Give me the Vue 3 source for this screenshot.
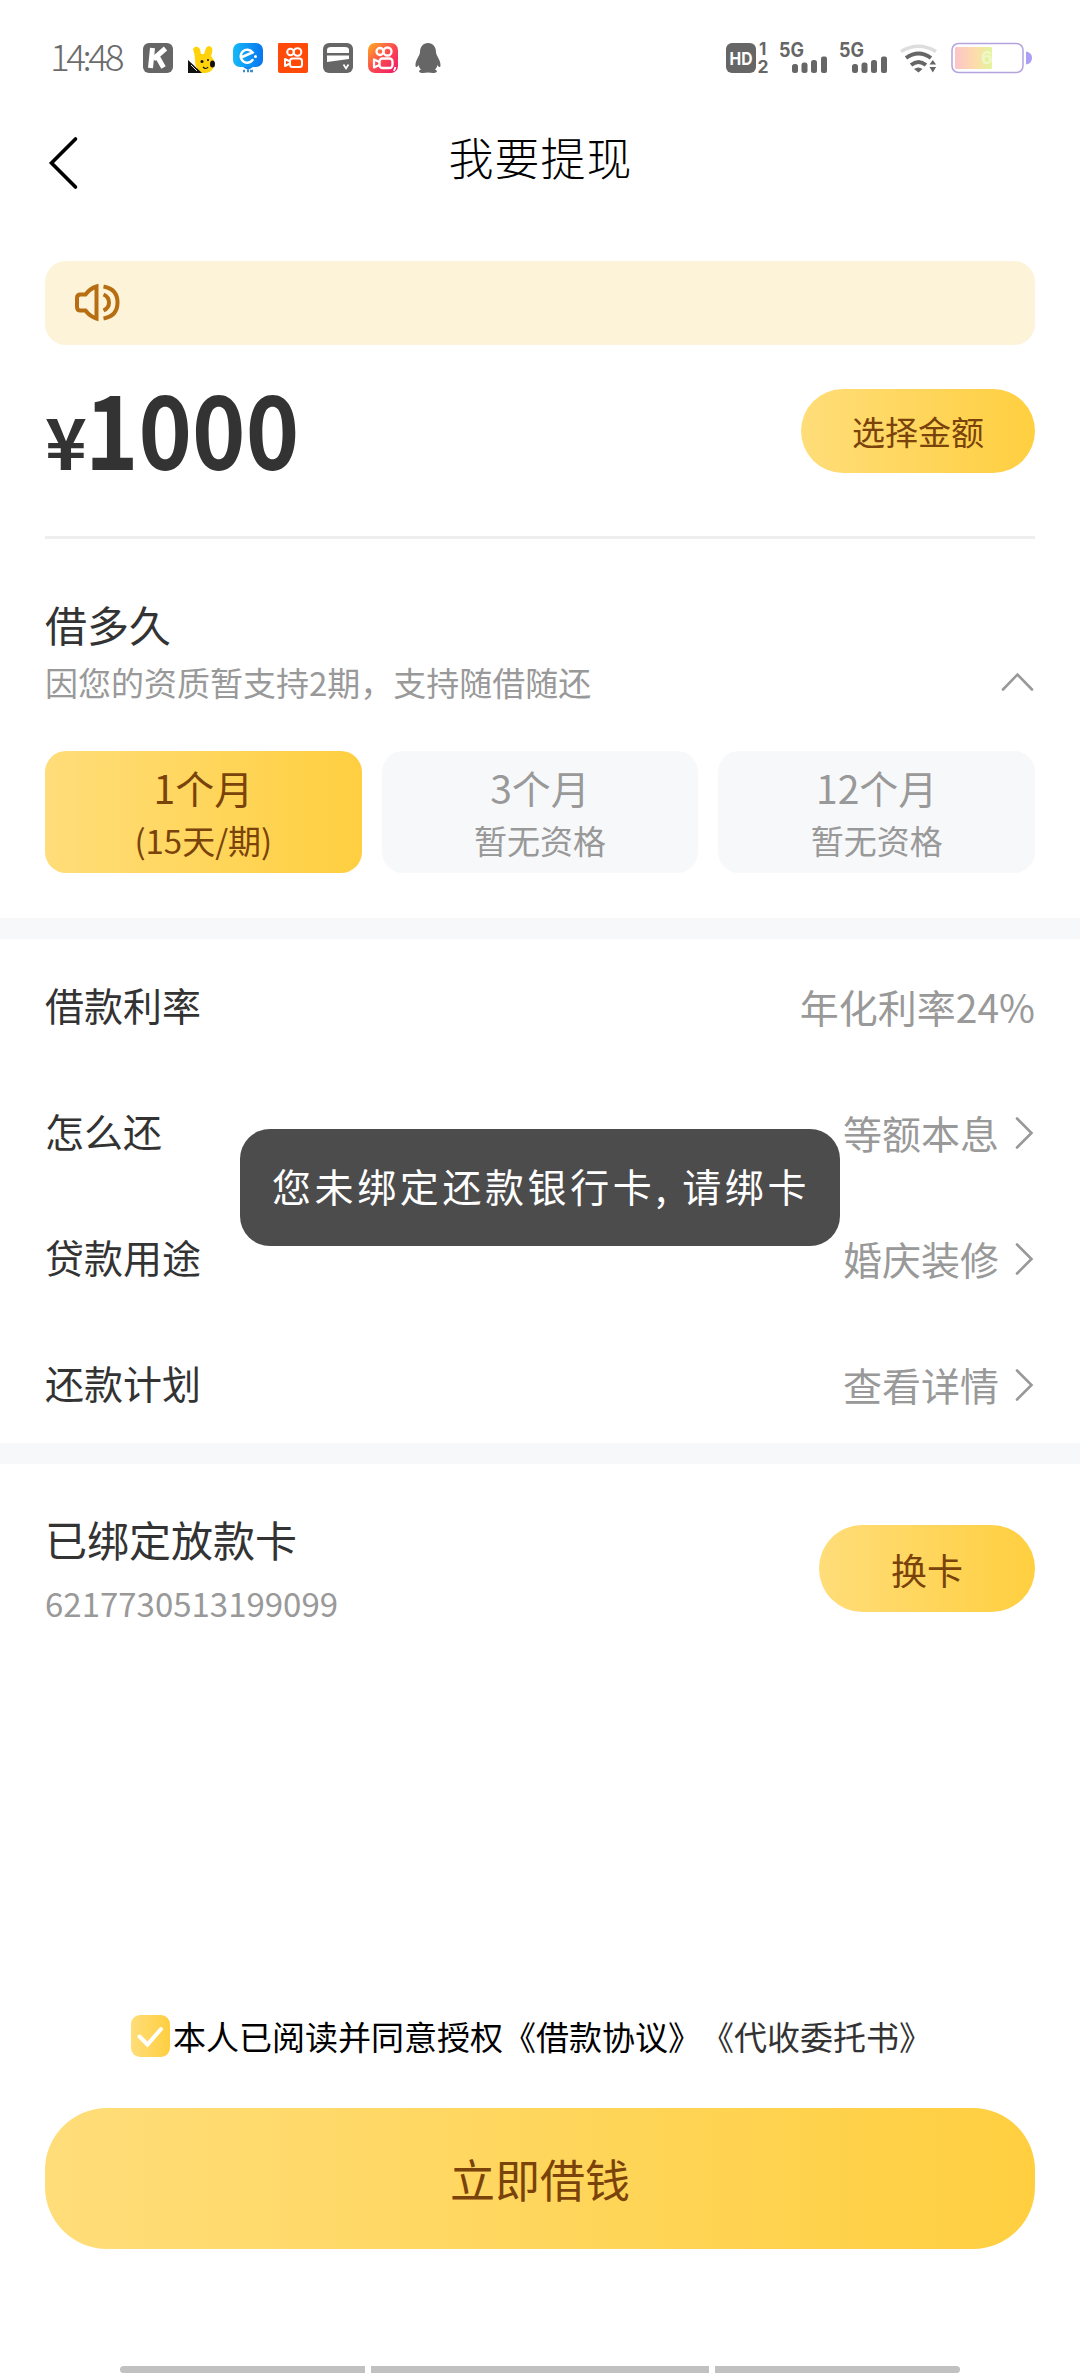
<script setup>
const terms = [
  { title: '1个月', note: '(15天/期)', active: true },
  { title: '3个月', note: '暂无资格', active: false },
  { title: '12个月', note: '暂无资格', active: false },
]
const rows = [
  { label: '借款利率', value: '年化利率24%', link: false },
  { label: '怎么还', value: '等额本息', link: true },
  { label: '贷款用途', value: '婚庆装修', link: true },
  { label: '还款计划', value: '查看详情', link: true },
]
</script>

<template>
  <div class="page">
    <div class="status">
      <span class="clock">14:48</span>
      <div class="apps">
        <svg width="30" height="30" viewBox="0 0 30 30">
          <rect width="30" height="30" rx="6" fill="#666" />
          <path d="M9.500 5 7.500 25M22.500 5.500 10.500 16M14 13l6.500 11.500" fill="none" stroke="#fff" stroke-width="5" />
        </svg>
        <svg width="30" height="30" viewBox="0 0 30 30">
          <path d="M5 6Q8 1 12 6L13 11 16 11 18 5Q21 1 24 5 25 8 23 13 27 17 26 23 24 30 17 30L13 30Q7 26 7 17 7 12 5 6Z" fill="#ffd20a" />
          <path d="M0 17 14 30H0Z" fill="#111" />
          <path d="M3 22l6 6M5 21l4 4" stroke="#ddd" stroke-width="1" />
          <ellipse cx="24.500" cy="21" rx="2.500" ry="3.500" fill="#111" />
          <circle cx="14" cy="18.500" r="1.500" fill="#111" /><circle cx="20" cy="17" r="1" fill="#111" />
          <path d="M15 24q3 3 5 0" fill="none" stroke="#111" stroke-width="1.200" />
        </svg>
        <svg width="30" height="30" viewBox="0 0 30 30">
          <defs><linearGradient id="blue" x1="0" x2="1"><stop offset="0" stop-color="#16b9f8" /><stop offset="1" stop-color="#0875ee" /></linearGradient></defs>
          <rect width="30" height="24" rx="7" fill="url(#blue)" />
          <path d="M10 24h10l-5 3z" fill="#0d86f0" />
          <path d="M8 14.500 19.500 9.500A6.500 6.500 0 1 0 19.500 17" fill="none" stroke="#fff" stroke-width="2.600" stroke-linecap="round" />
          <circle cx="22.500" cy="13.500" r="1.500" fill="#fff" />
          <path d="M10 28h2m2 0h2m1 0h3" stroke="#3d8ecb" stroke-width="2.500" />
        </svg>
        <svg width="30" height="30" viewBox="0 0 30 30">
          <rect y="-.5" width="30" height="30.500" rx="2" fill="#ff4a0a" />
          <g fill="none" stroke="#fff" stroke-width="2"><circle cx="12.500" cy="9" r="3.300" /><circle cx="19.500" cy="9" r="3.800" /><rect x="12" y="15.500" width="12" height="8.500" rx="2.500" /><path d="M12 18.500 7 16v7l5-2.500" stroke-linejoin="round" /></g>
        </svg>
        <svg width="30" height="30" viewBox="0 0 30 30">
          <rect width="30" height="30" rx="6" fill="#666" />
          <path d="M4 10V7Q4 4 8 4H22Q26 4 26 7V10ZM4 12.500H26V16L4 19Z" fill="#fff" />
          <path d="m20.500 21.500 2.500 4 2.500-4" fill="none" stroke="#fff" stroke-width="1.700" />
        </svg>
        <svg width="30" height="30" viewBox="0 0 30 30">
          <defs><linearGradient id="kw" x1="0" y1="0" x2="1" y2="1"><stop offset="0" stop-color="#ffae21" /><stop offset=".5" stop-color="#fb4a50" /><stop offset="1" stop-color="#ed176b" /></linearGradient></defs>
          <rect width="30" height="30" rx="7" fill="url(#kw)" />
          <g fill="none" stroke="#fff" stroke-width="2.300"><circle cx="12" cy="8.500" r="3.500" /><circle cx="19.500" cy="8.500" r="4" /><rect x="11.500" y="15.500" width="13" height="9.500" rx="3" /><path d="M11.500 19 6 16.500v8l5.500-2.500" stroke-linejoin="round" /></g>
          <path d="m27.500 24-1.500 4" stroke="#fff" stroke-width="1.800" />
        </svg>
        <svg width="30" height="30" viewBox="0 0 30 30">
          <path d="M15 0C20 0 23 4 23 9 23 13 28 17 27.500 23 27 25 25.500 24 24.500 22 24 24 23 25.500 22 26.500 25 27.500 24.500 30 20 30L15 29.500 10 30C5.500 30 5 27.500 8 26.500 7 25.500 6 24 5.500 22 4.500 24 3 25 2.500 23 2 17 7 13 7 9 7 4 10 0 15 0Z" fill="#666" />
        </svg>
      </div>
      <svg class="signals" width="308" height="54" viewBox="0 -10 308 54">
        <rect x="0" y="2" width="30" height="30" rx="6" fill="#666" />
        <g class="sys">
          <text x="3.500" y="23.500" font-size="18" fill="#fff" textLength="23" lengthAdjust="spacingAndGlyphs">HD</text>
          <text x="33" y="14" font-size="17">1</text>
          <text x="31.500" y="31.500" font-size="17" textLength="11" lengthAdjust="spacingAndGlyphs">2</text>
          <text x="53" y="16" font-size="19.500" textLength="25" lengthAdjust="spacingAndGlyphs">5G</text>
          <text x="113" y="16" font-size="19.500" textLength="25" lengthAdjust="spacingAndGlyphs">5G</text>
        </g>
        <g fill="#666">
          <rect x="66" y="23" width="6" height="9" rx="2.500" /><rect x="75.500" y="21.500" width="6" height="10.500" rx="2.500" /><rect x="85" y="19" width="6" height="13" rx="2.500" /><rect x="95" y="15.500" width="6" height="16.500" rx="2" />
          <rect x="126" y="23" width="6" height="9" rx="2.500" /><rect x="135.500" y="21.500" width="6" height="10.500" rx="2.500" /><rect x="145" y="19" width="6" height="13" rx="2.500" /><rect x="155" y="15.500" width="6" height="16.500" rx="2" />
        </g>
        <path d="M175 10.500Q192.500 0 210 10.500" fill="none" stroke="#ddd" stroke-width="3.500" />
        <path d="M180 17Q192.500 8 205 17M185 24Q192.500 18 200 24" fill="none" stroke="#666" stroke-width="4" />
        <path d="M188 28Q192.500 25 196.500 28L192.500 31.500Z M203.500 23.500l3.300-4.500 3.300 4.500ZM203.500 26h6.600l-3.300 5.500Z" fill="#666" />
        <defs><linearGradient id="bat" x1="0" x2="1"><stop offset="0" stop-color="#fbc4ca" /><stop offset=".55" stop-color="#fddcaa" /><stop offset="1" stop-color="#e2f59c" /></linearGradient></defs>
        <rect x="226" y="2.500" width="71" height="29" rx="6.500" fill="#fff" stroke="#b4a4de" stroke-width="1.500" />
        <rect x="229" y="6" width="37" height="22" rx="1.500" fill="url(#bat)" />
        <text x="255" y="23" font-size="18" font-weight="700" fill="#eef8c6" class="digit">6</text>
        <path d="M300 10.500q6 1 6 6.500t-6 6.500z" fill="#ac9df5" />
      </svg>
    </div>

    <header class="nav">
      <svg class="back" width="34" height="56" viewBox="0 0 34 56">
        <path d="M30.500 4 6.500 28 30.500 52" fill="none" stroke="#000" stroke-width="3.600" stroke-linecap="round" />
      </svg>
      <h1>我要提现</h1>
    </header>

    <main>
      <div class="notice">
        <svg width="50" height="42" viewBox="0 0 50 42">
          <g fill="none" stroke="#b76e12" stroke-width="4">
            <path d="M23.500 4.500V36.500Q17 34.500 12.500 28.500H7.500Q4 28.500 4 25V16Q4 12.500 7.500 12.500H12.500Q17 6.500 23.500 4.500Z" />
            <path d="M30.500 4.500Q44.500 7 44.500 20.500T30.500 36.500M30.500 12.500Q36 15 36 20.500T30.500 28.500" />
          </g>
        </svg>
      </div>

      <section class="amount">
        <div class="sum"><span class="yen">¥</span><span class="num">1000</span></div>
        <button class="pill choose">选择金额</button>
      </section>

      <section class="term">
        <h2>借多久</h2>
        <div class="hint">
          <span>因您的资质暂支持2期，支持随借随还</span>
          <svg width="36" height="24" viewBox="0 0 36 24"><path d="M4 19.500 18.500 4.500 33 19.500" fill="none" stroke="#999" stroke-width="2.600" stroke-linecap="round" /></svg>
        </div>
        <div class="tabs">
          <div v-for="t in terms" :key="t.title" class="tab" :class="{ active: t.active }">
            <span class="tab-title">{{ t.title }}</span>
            <span class="tab-note">{{ t.note }}</span>
          </div>
        </div>
      </section>
    </main>

    <div class="band"></div>
    <section class="rows">
      <div v-for="r in rows" :key="r.label" class="row">
        <span class="label">{{ r.label }}</span>
        <span class="value">{{ r.value }}</span>
        <svg v-if="r.link" class="go" width="22" height="36" viewBox="0 0 22 36"><path d="M4 3.500 18.500 18 4 32.500" fill="none" stroke="#999" stroke-width="2.600" stroke-linecap="round" /></svg>
      </div>
    </section>
    <div class="band"></div>

    <section class="card">
      <div>
        <h2>已绑定放款卡</h2>
        <p>6217730513199099</p>
      </div>
      <button class="pill swap">换卡</button>
    </section>

    <footer>
      <div class="agree">
        <span class="box"><svg width="39" height="42" viewBox="0 0 39 42"><path d="M8.500 21.500 16.500 29.500 30 14" fill="none" stroke="#fff" stroke-width="4" stroke-linecap="round" /></svg></span>
        <span>本人已阅读并同意授权《借款协议》</span><span class="second">《代收委托书》</span>
      </div>
      <button class="submit">立即借钱</button>
    </footer>

    <div class="gesture"><i></i><i class="mid"></i><i></i></div>

    <div class="toast">您未绑定还款银行卡, 请绑卡</div>
  </div>
</template>

<style>
body { margin: 0; background: #fff; }
</style>

<style scoped>
* { box-sizing: border-box; }
.page {
  position: relative;
  display: flex;
  flex-direction: column;
  width: 1080px;
  height: 2376px;
  overflow: hidden;
  background: #fff;
  color: #333;
  font-family: "Noto Sans CJK SC", sans-serif;
}
h1, h2, p { margin: 0; font-weight: 400; }
svg { display: block; flex: none; }
button { border: 0; padding: 0; font-family: inherit; color: #7a430b; }

.status { display: flex; align-items: flex-start; height: 116px; padding: 31px 46px 0 50px; }
.clock { width: 93px; margin-top: 4px; font-size: 37px; line-height: 40px; font-weight: 300; color: #6c6c6c; letter-spacing: -3.500px; }
.apps { display: flex; gap: 15px; margin-top: 12px; }
.signals { margin-left: auto; }
.sys { font-family: Inter, sans-serif; font-weight: 700; fill: #666; }
.digit { font-family: Inter, sans-serif; }

.nav { display: flex; align-items: center; height: 93px; padding: 0 45px; }
.back { width: 34px; }
.nav h1 { flex: 1; margin: -12px 33px 0 0; text-align: center; font-size: 45px; line-height: 60px; font-weight: 300; letter-spacing: 1px; color: #000; }

main { padding: 52px 45px 45px; height: 709px; }
.notice { display: flex; align-items: center; height: 84px; padding-left: 28px; border-radius: 21px; background: #fdf3d8; }
.amount { display: flex; justify-content: space-between; height: 194px; padding-top: 44px; border-bottom: 3px solid #eee; }
.sum { display: flex; align-items: baseline; height: 84px; margin-top: -5px; line-height: 84px; font-weight: 700; }
.yen { width: 40px; font-size: 71px; }
.num { font-size: 102px; transform: scaleX(.89); transform-origin: left; }
.pill { background: linear-gradient(90deg, #ffdd79, #ffcf40); }
.choose { width: 234px; height: 84px; border-radius: 42px; font-size: 33px; line-height: 84px; }
.term h2 { margin-top: 55px; font-size: 42px; line-height: 60px; }
.hint { display: flex; justify-content: space-between; align-items: center; height: 56px; font-size: 33px; color: #999; }
.tabs { display: flex; gap: 20px; margin-top: 41px; }
.tab { flex: 1; display: flex; flex-direction: column; align-items: center; height: 122px; padding-top: 9px; border-radius: 21px; background: #f7f8fa; color: #999; }
.tab.active { background: linear-gradient(90deg, #ffdd79, #ffcf40); color: #7a430b; }
.tab-title { font-size: 39px; line-height: 54px; }
.tab-note { font-size: 33px; line-height: 52px; }

.band { height: 21px; background: #f7f8fa; }
.rows { padding: 0 45px; }
.row { display: flex; align-items: center; height: 126px; font-size: 39px; line-height: 56px; }
.label { flex: 1; margin-top: 4px; }
.value { margin-top: 8px; color: #999; }
.go { margin: 10px 0 0 14px; }

.card { display: flex; justify-content: space-between; padding: 45px 45px 0; }
.card h2 { font-size: 42px; line-height: 60px; }
.card p { margin-top: 10px; font-size: 33px; line-height: 48px; color: #999; }
.swap { width: 216px; height: 87px; margin-top: 16px; border-radius: 43.500px; font-size: 36px; line-height: 86px; }

footer { margin-top: auto; padding: 0 45px; }
.agree { display: flex; align-items: center; height: 42px; padding-left: 86px; font-size: 33px; line-height: 42px; color: #000; }
.box { width: 39px; height: 42px; margin-right: 3px; border-radius: 9px; background: linear-gradient(90deg, #ffdd79, #ffcf40); }
.second { color: #333; }
.submit { display: block; width: 100%; height: 141px; margin-top: 51px; border-radius: 62px; font-size: 45px; line-height: 141px; background: linear-gradient(90deg, #ffdd79, #ffcf40); }
.gesture { display: flex; gap: 6px; height: 7px; margin: 117px 120px 3px; }
.gesture i { width: 245px; border-radius: 4px 0 0 4px; background: #c1c1c1; }
.gesture i:last-child { border-radius: 0 4px 4px 0; }
.gesture .mid { width: 338px; border-radius: 0; }

.toast {
  position: absolute;
  left: 240px;
  top: 1129px;
  width: 600px;
  height: 117px;
  padding-left: 2px;
  border-radius: 30px;
  background: #4c4c4c;
  color: #fff;
  text-align: center;
  white-space: nowrap;
  font-size: 39px;
  line-height: 113px;
  letter-spacing: 3.600px;
}
</style>
